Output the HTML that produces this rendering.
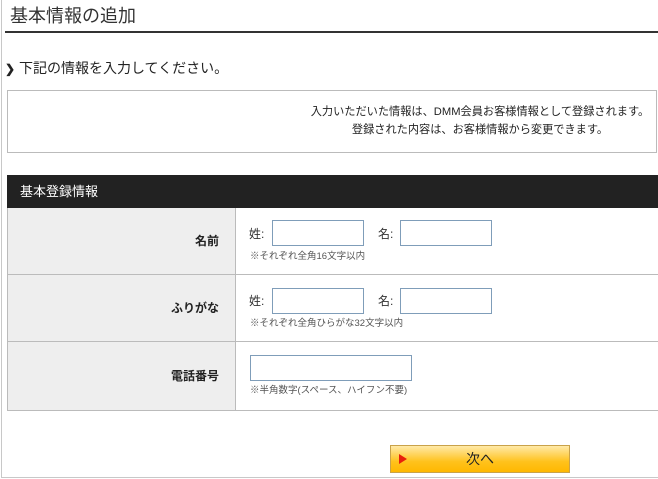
<!DOCTYPE html>
<html><head><meta charset="utf-8"><style>
*{margin:0;padding:0;box-sizing:border-box}
body{width:658px;height:479px;background:#fff;position:relative;overflow:hidden;font-family:"Liberation Sans","Noto Sans CJK JP",sans-serif;color:#333}
.a{position:absolute}
.frame{left:1px;top:-2px;width:660px;height:480px;border:1px solid #c8c8c8}
.title{left:10px;top:4px;font-size:18px;color:#333;line-height:24px}
.rule{left:5px;top:31px;width:653px;height:2px;background:#333}
.sub{left:5px;top:58px;font-size:14px;line-height:20px;color:#222}
.info{left:7px;top:90px;width:650px;height:63px;border:1px solid #bbb}
.infot{left:290px;top:103px;width:380px;font-size:11.2px;text-align:center;line-height:18px;color:#222}
.hdr{left:7px;top:175px;width:651px;height:33px;background:#222;color:#fff;font-size:13px;line-height:33px;padding-left:13px}
.lab{left:7px;width:229px;background:#eee;border:1px solid #bbb;border-top:none;font-size:12px;font-weight:bold;text-align:right;padding-right:16px;color:#222}
.val{left:235px;width:423px;border-bottom:1px solid #bbb;border-left:1px solid #bbb}
.inp{border:1px solid #7f9db9;background:#fff;height:26px}
.t{font-size:12px;color:#333}
.note{font-size:9.5px;color:#555}
.btn{left:390px;top:445px;width:180px;height:28px;border:1px solid #c9a24a;background:linear-gradient(#ffe9a8,#ffc21c 60%,#ffb800);text-align:center;font-size:14px;line-height:26px;color:#222}
</style></head><body>
<div class="a frame"></div>
<div class="a title">基本情報の追加</div>
<div class="a rule"></div>
<div class="a sub"><b style="font-size:12px">❯</b> 下記の情報を入力してください。</div>
<div class="a info"></div>
<div class="a infot">入力いただいた情報は、DMM会員お客様情報として登録されます。<br>登録された内容は、お客様情報から変更できます。</div>
<div class="a hdr">基本登録情報</div>

<div class="a lab" style="top:208px;height:67px;line-height:66px">名前</div>
<div class="a val" style="top:208px;height:67px"></div>
<div class="a t" style="left:249px;top:225px">姓:</div>
<div class="a inp" style="left:272px;top:220px;width:92px"></div>
<div class="a t" style="left:378px;top:225px">名:</div>
<div class="a inp" style="left:400px;top:220px;width:92px"></div>
<div class="a note" style="left:250px;top:248px">※それぞれ全角16文字以内</div>

<div class="a lab" style="top:275px;height:67px;line-height:66px">ふりがな</div>
<div class="a val" style="top:275px;height:67px"></div>
<div class="a t" style="left:249px;top:292px">姓:</div>
<div class="a inp" style="left:272px;top:288px;width:92px"></div>
<div class="a t" style="left:378px;top:292px">名:</div>
<div class="a inp" style="left:400px;top:288px;width:92px"></div>
<div class="a note" style="left:250px;top:315px">※それぞれ全角ひらがな32文字以内</div>

<div class="a lab" style="top:342px;height:69px;line-height:68px">電話番号</div>
<div class="a val" style="top:342px;height:69px"></div>
<div class="a inp" style="left:250px;top:355px;width:162px"></div>
<div class="a note" style="left:250px;top:382px">※半角数字(スペース、ハイフン不要)</div>

<div class="a btn"><span style="position:absolute;left:8px;top:8px;width:0;height:0;border-left:8px solid #e8200c;border-top:5px solid transparent;border-bottom:5px solid transparent"></span>次へ</div>
</body></html>
